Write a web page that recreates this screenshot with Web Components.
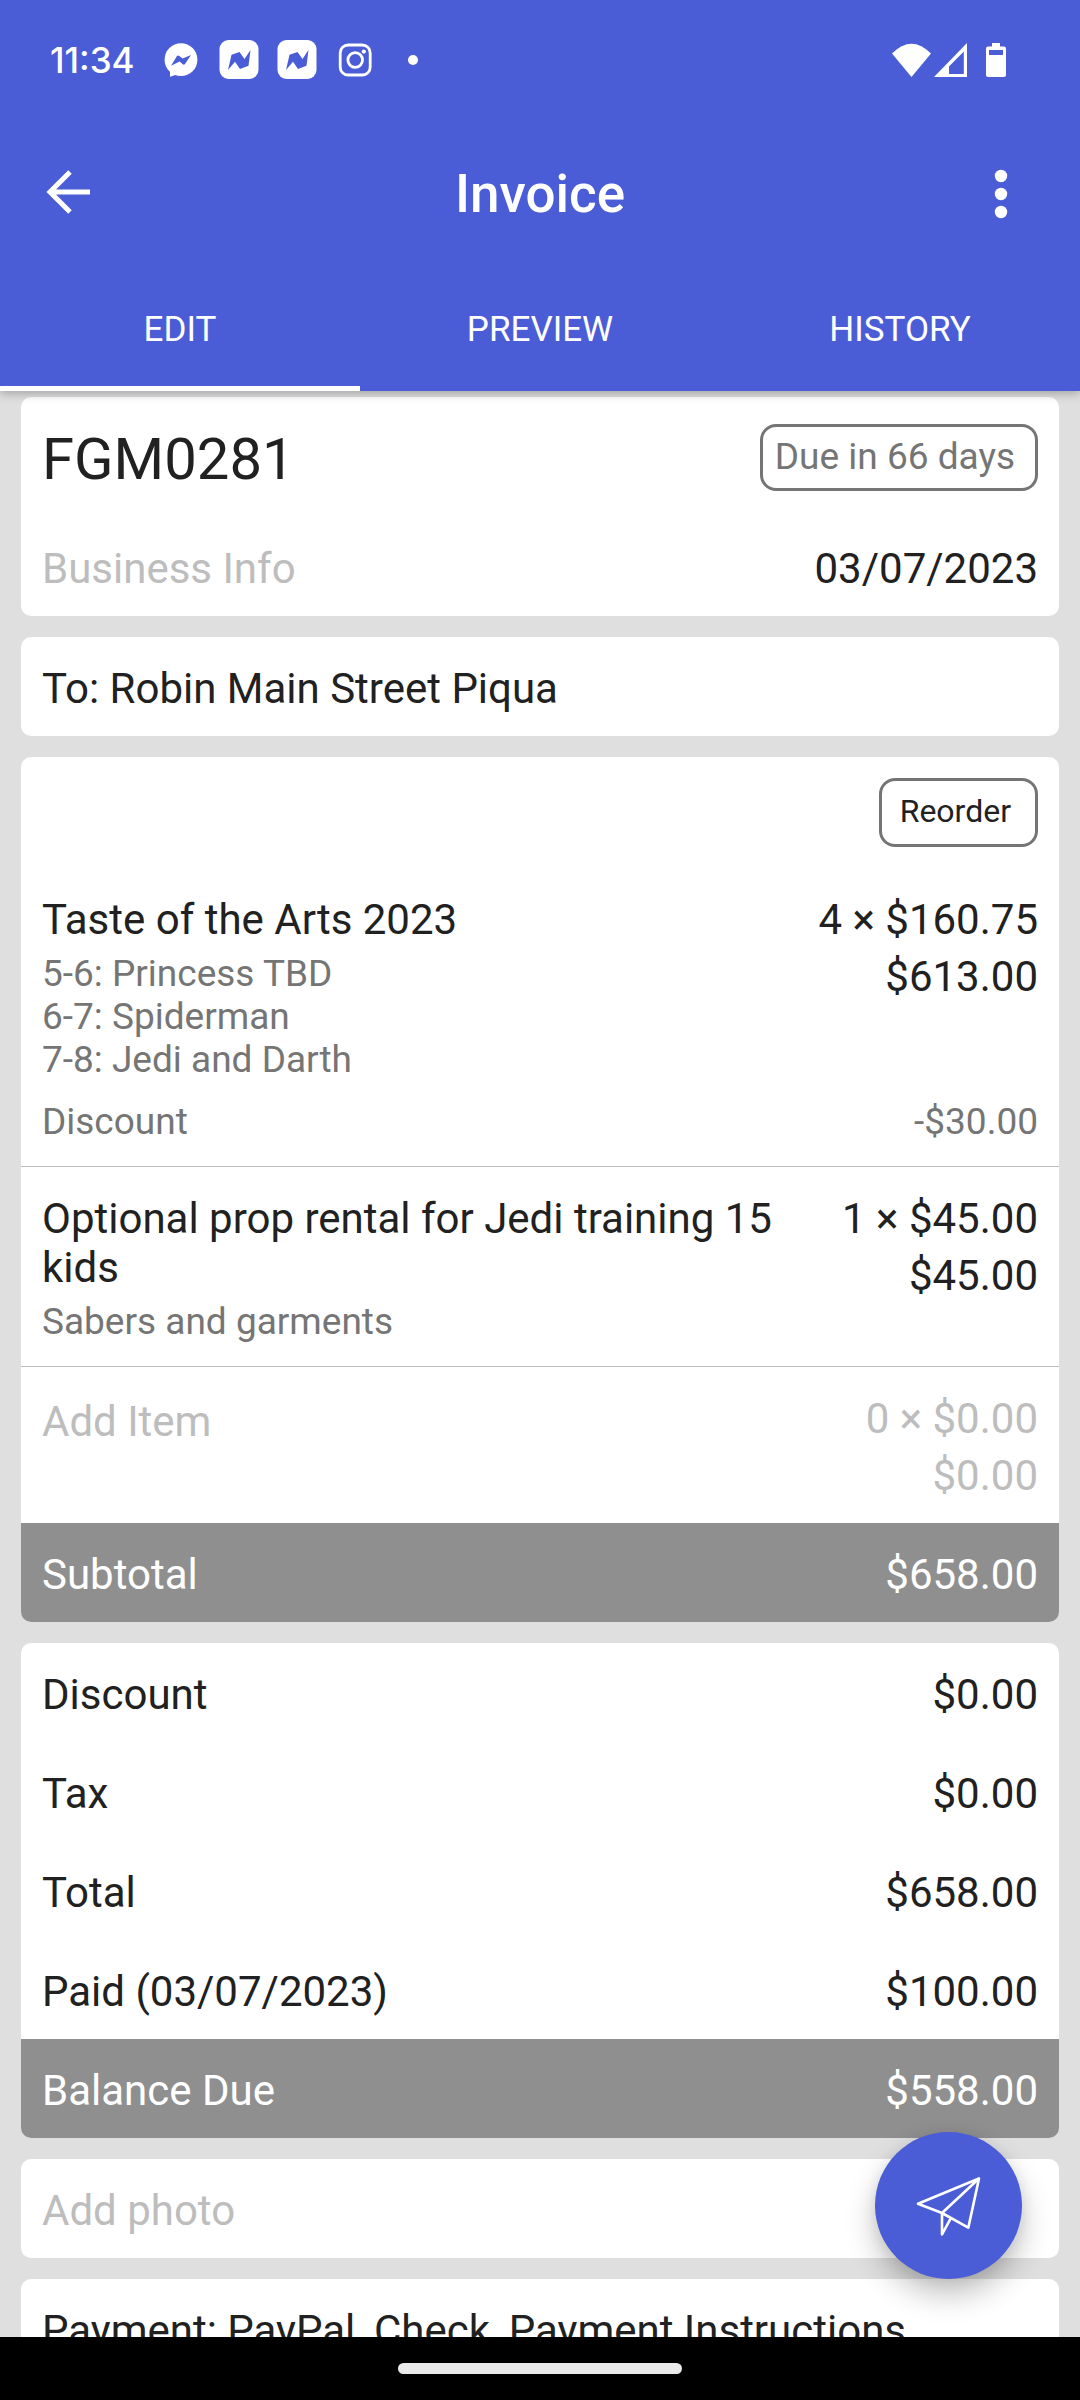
<!DOCTYPE html>
<html lang="en">
<head>
<meta charset="utf-8">
<meta name="viewport" content="width=device-width, initial-scale=1">
<title>Invoice</title>
<style>
  :root {
    --brand: #4a5dd6;
    --page: #dfdfdf;
    --ink: #212121;
    --muted: #757575;
    --hint: #bdbdbd;
    --band: #8f8f8f;
    --pad: 21px;
    --top: 27px;
    --bottom: 23px;
  }
  body {
    margin: 0;
    font-family: Roboto, sans-serif;
    font-size: 42px;
    line-height: 49px;
    color: var(--ink);
    background: var(--page);
  }
</style>
</head>
<body>
<invoice-app>
  <status-bar slot="top" time="11:34"></status-bar>
  <app-bar slot="top" heading="Invoice"></app-bar>
  <tab-strip slot="top" tabs="EDIT,PREVIEW,HISTORY"></tab-strip>

  <info-card>
    <card-row large>
      FGM0281
      <outline-button slot="end" tone="muted">Due in 66 days</outline-button>
    </card-row>
    <card-row>
      <text-button tone="hint">Business Info</text-button>
      <text-button slot="end">03/07/2023</text-button>
    </card-row>
  </info-card>

  <info-card>
    <card-row>To: Robin Main Street Piqua</card-row>
  </info-card>

  <info-card>
    <card-toolbar><outline-button small>Reorder</outline-button></card-toolbar>
    <line-item quantity="4 × $160.75" total="$613.00" discount="-$30.00">
      Taste of the Arts 2023
      <div slot="detail">5-6: Princess TBD</div>
      <div slot="detail">6-7: Spiderman</div>
      <div slot="detail">7-8: Jedi and Darth</div>
    </line-item>
    <line-item divided quantity="1 × $45.00" total="$45.00">
      Optional prop rental for Jedi training 15 kids
      <div slot="detail">Sabers and garments</div>
    </line-item>
    <line-item divided placeholder quantity="0 × $0.00" total="$0.00">
      <text-button tone="hint">Add Item</text-button>
    </line-item>
    <card-row band>Subtotal<span slot="end">$658.00</span></card-row>
  </info-card>

  <info-card>
    <card-row>Discount<span slot="end">$0.00</span></card-row>
    <card-row>Tax<span slot="end">$0.00</span></card-row>
    <card-row>Total<span slot="end">$658.00</span></card-row>
    <card-row>Paid (03/07/2023)<span slot="end">$100.00</span></card-row>
    <card-row band>Balance Due<span slot="end">$558.00</span></card-row>
  </info-card>

  <info-card>
    <card-row><text-button tone="hint">Add photo</text-button></card-row>
  </info-card>

  <info-card>
    <card-row>Payment: PayPal, Check, Payment Instructions</card-row>
  </info-card>

  <send-button slot="float"></send-button>
  <nav-handle slot="bottom"></nav-handle>
</invoice-app>

<script>
const define = (name, render) => customElements.define(name, class extends HTMLElement {
  connectedCallback() {
    if (!this.shadowRoot) this.attachShadow({ mode: 'open' }).innerHTML = render(this);
  }
});

define('invoice-app', () => `
  <style>
    :host { display: flex; flex-direction: column; height: 100vh; }
    header { background: var(--brand); color: #fff; position: relative; z-index: 1; box-shadow: 0 2px 10px rgba(0,0,0,.3); }
    .body { flex: 1; min-height: 0; position: relative; display: flex; }
    main { flex: 1; overflow: auto; scrollbar-width: none; display: flex; flex-direction: column; gap: var(--pad); padding: 6px var(--pad) var(--pad); }
    ::slotted([slot=float]) { position: absolute; right: 58px; bottom: 58px; }
  </style>
  <header><slot name="top"></slot></header>
  <div class="body"><main><slot></slot></main><slot name="float"></slot></div>
  <slot name="bottom"></slot>`);

define('status-bar', el => `
  <style>
    :host { display: flex; align-items: center; justify-content: space-between; height: 116px; padding: 2px 74px 0 50px; }
    div { display: flex; align-items: center; }
    .left { gap: 18px; }
    time { width: 93px; font-family: Inter, Roboto, sans-serif; font-size: 35px; font-weight: 500; }
    svg { display: block; fill: #fff; }
    .battery { margin-left: 18px; }
  </style>
  <div class="left">
    <time>${el.getAttribute('time')}</time>
    <svg width="40" height="40"><circle cx="20" cy="19.7" r="16.4"/><path d="M9 29v7.8l7-2.2z"/><path fill="#4a5dd6" d="M10 25.7l6-9.6q1-1 2.200-.2l3.500 2.600 8.300-3.500-6 9q-1 1.200-2.300.2l-3-2.700z"/></svg>
    ${`<svg width="40" height="40"><rect x=".5" y="0" width="39" height="39" rx="9"/><path fill="#4a5dd6" d="M9 30l3.500-15.300 8-2.700 5 7 6-9-2 15.700-8.500 3.300-5-7.300z"/></svg>`.repeat(2)}
    <svg width="40" height="40"><g fill="none" stroke="#fff" stroke-width="2.800"><rect x="5.200" y="5" width="30" height="30" rx="8"/><circle cx="20.200" cy="20" r="7.300"/></g><circle cx="28.800" cy="11.600" r="2.100"/></svg>
    <svg width="40" height="40"><circle cx="20" cy="20" r="5"/></svg>
  </div>
  <div>
    <svg width="41" height="36"><path d="M0 11.500Q19.500-8 39 11.500L19.500 35z"/></svg>
    <svg width="35" height="36"><path fill-rule="evenodd" d="M1 35L34 1V35zM16 24.500V32H30.800V9.500z"/></svg>
    <svg class="battery" width="20" height="36"><path fill-rule="evenodd" d="M6 1h8v3.500h4q2 0 2 2V33q0 2-2 2H2q-2 0-2-2V6.500q0-2 2-2h4zM3 8v5h14V8z"/></svg>
  </div>`);

define('app-bar', el => `
  <style>
    :host { display: grid; grid-template-columns: 1fr auto 1fr; align-items: center; height: 147px; padding: 0 42px; }
    h1 { margin: 0; padding-top: 4px; font-size: 53px; line-height: 62px; font-weight: 500; }
    button { border: 0; padding: 0; background: none; justify-self: start; }
    button.more { justify-self: end; }
    svg { display: block; }
  </style>
  <button aria-label="Back"><svg width="74" height="74" fill="none" stroke="#fff" stroke-width="5"><path d="M48 37H9M28 17L8 37l20 20"/></svg></button>
  <h1>${el.getAttribute('heading')}</h1>
  <button class="more" aria-label="More options"><svg width="74" height="74" fill="#fff"><circle cx="37" cy="21" r="6.200"/><circle cx="37" cy="39" r="6.200"/><circle cx="37" cy="57" r="6.200"/></svg></button>`);

define('tab-strip', el => `
  <style>
    :host { display: flex; height: 126px; }
    button { flex: 1; border: 0; padding: 8px 0 0; background: none; color: #fff; font: inherit; font-size: 35px; border-bottom: 5px solid transparent; }
    button[aria-selected=true] { border-color: #fff; }
    nav { display: flex; flex: 1; }
  </style>
  <nav role="tablist">${el.getAttribute('tabs').split(',').map((t, i) =>
    `<button role="tab" aria-selected="${i === 0}">${t}</button>`).join('')}</nav>`);

define('info-card', () => `
  <style>
    :host { display: block; flex: none; background: #fff; border-radius: 10px; overflow: hidden; }
  </style><slot></slot>`);

define('card-row', () => `
  <style>
    :host { display: flex; justify-content: space-between; gap: 42px; padding: var(--top) var(--pad) var(--bottom); }
    :host([large]) { font-size: 58px; line-height: 70px; }
    :host([band]) { background: var(--band); color: #fff; }
  </style>
  <div><slot></slot></div><slot name="end"></slot>`);

define('card-toolbar', () => `
  <style>
    :host { display: flex; justify-content: flex-end; padding: var(--pad); }
  </style><slot></slot>`);

define('text-button', () => `
  <style>
    :host { display: block; }
    :host([tone=hint]) { color: var(--hint); }
    button { display: block; border: 0; padding: 0; background: none; color: inherit; font: inherit; text-align: left; }
  </style><button><slot></slot></button>`);

define('outline-button', () => `
  <style>
    :host { display: block; }
    button { display: block; border: 3px solid var(--muted); border-radius: 16px; padding: 8px 20px 10px 12px; background: none; color: var(--ink); font: inherit; font-size: 37px; line-height: 43px; }
    :host([tone=muted]) button { color: var(--muted); }
    :host([small]) button { font-size: 32px; padding: 9px 24px 11px 18px; }
  </style><button><slot></slot></button>`);

define('line-item', el => `
  <style>
    :host { display: block; padding: var(--top) var(--pad) var(--bottom); }
    :host([divided]) { border-top: 1px solid var(--hint); }
    .row { display: flex; gap: 42px; }
    .name { flex: 1; }
    .amount { display: flex; flex-direction: column; gap: 8px; text-align: right; }
    .detail, .discount { font-size: 37px; line-height: 43px; color: var(--muted); }
    .detail { padding-top: 8px; }
    .discount { display: flex; justify-content: space-between; padding-top: 19px; }
    :host([placeholder]) .amount { color: var(--hint); }
    :host([placeholder]) .name { padding-top: 3px; }
    :host([placeholder]) .detail { display: none; }
  </style>
  <div class="row">
    <div class="name"><slot></slot><div class="detail"><slot name="detail"></slot></div></div>
    <div class="amount"><span>${el.getAttribute('quantity')}</span><span>${el.getAttribute('total')}</span></div>
  </div>
  ${el.hasAttribute('discount') ? `<div class="discount"><span>Discount</span><span>${el.getAttribute('discount')}</span></div>` : ''}`);

define('send-button', () => `
  <style>
    :host { display: block; }
    button { display: block; border: 0; padding: 0; border-radius: 50%; background: var(--brand); box-shadow: 0 16px 30px rgba(0,0,0,.24), 0 2px 14px rgba(0,0,0,.08); }
    svg { display: block; }
  </style>
  <button aria-label="Send"><svg width="147" height="147" fill="none" stroke="#fff" stroke-width="2.600" stroke-linejoin="round" stroke-linecap="round"><path d="M104 46.500L43 71.700 67 81l26.300 14.700zM104 46.500L67 81v21.500l8.700-16.200"/></svg></button>`);

define('nav-handle', () => `
  <style>
    :host { display: flex; justify-content: center; align-items: center; height: 63px; background: #000; }
    div { width: 284px; height: 11px; border-radius: 6px; background: #ebebeb; }
  </style><div></div>`);
</script>
</body>
</html>
